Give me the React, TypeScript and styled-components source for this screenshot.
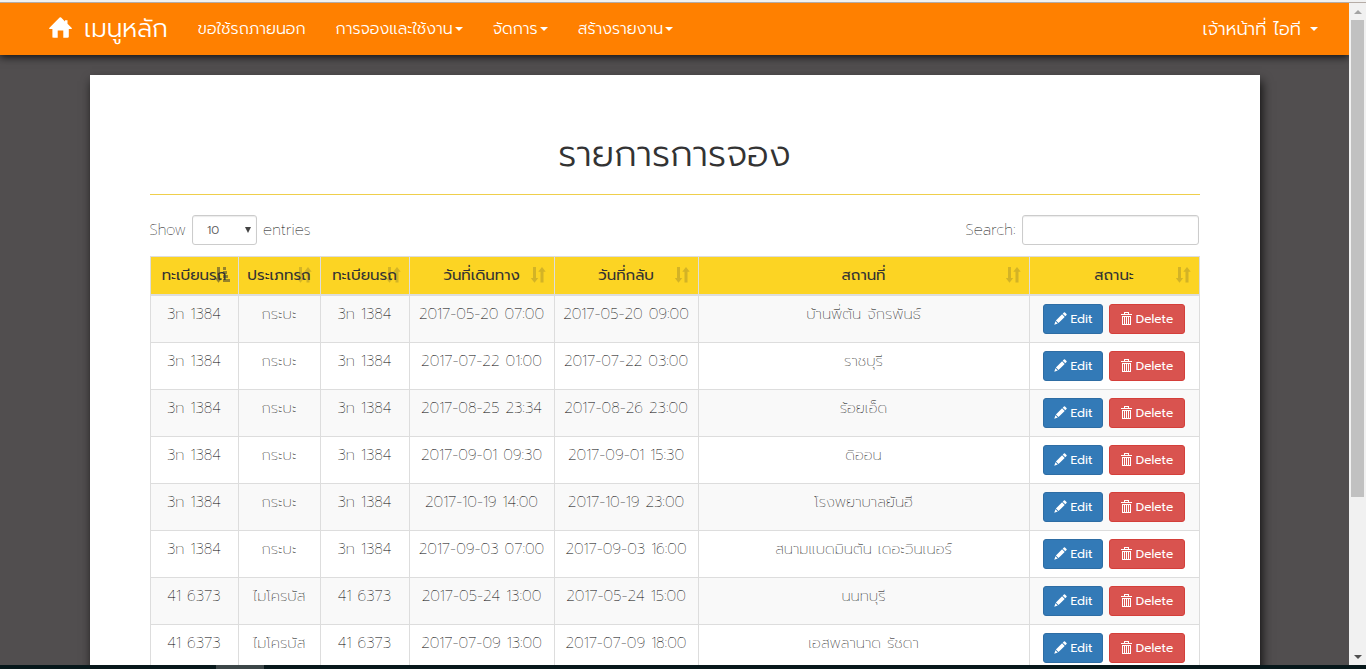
import React from "react";
import styled, { createGlobalStyle, css } from "styled-components";

const GlobalStyle = createGlobalStyle`
  *, *::before, *::after { box-sizing: border-box; }
  body {
    margin: 0;
    background: #514e4f;
    color: #000;
    font-family: Prompt, Inter, "Noto Sans Thai", "Open Sans", sans-serif;
    font-size: 15px;
    font-weight: 200;
    line-height: 20px;
  }
`;

const Window = styled.div`
  display: flex;
  flex-direction: column;
  height: 100vh;
  overflow: hidden;
`;

const TopEdge = styled.div`
  flex: none;
  height: 3px;
  background: #f1f1f1;
  border-bottom: 1px solid #b5aca6;
`;

const BottomEdge = styled.div`
  flex: none;
  height: 4px;
  padding-left: 216px;
  background: #07181b;
`;

const ActiveTask = styled.div`
  width: 48px;
  height: 100%;
  background: #3c4648;
`;

const Viewport = styled.div`
  display: flex;
  flex: 1;
  min-height: 0;
`;

const Page = styled.div`
  flex: 1;
  min-width: 0;
  overflow: hidden;
`;

const ScrollTrack = styled.div`
  display: flex;
  flex-direction: column;
  align-items: center;
  flex: none;
  width: 17px;
  background: #f1f1f1;
`;

const ScrollButton = styled.button`
  display: flex;
  align-items: center;
  justify-content: center;
  flex: none;
  width: 17px;
  height: 17px;
  padding: 0;
  border: 0;
  background: none;
`;

const ScrollThumb = styled.div`
  width: 13px;
  height: 72%;
  background: #c1c1c1;
`;

const ScrollSpace = styled.div`
  flex: 1;
`;

const Navbar = styled.nav`
  position: relative;
  display: flex;
  align-items: center;
  height: 52px;
  padding: 0 31px 0 49px;
  background: #ff8000;
  font-weight: 300;
  box-shadow: 0 2px 8px rgba(0, 0, 0, 0.8);
`;

const Brand = styled.a`
  display: flex;
  align-items: center;
  gap: 12px;
  margin-right: 30px;
  color: #fff;
  font-size: 25px;
  line-height: 32px;
  text-decoration: none;

  svg { margin-bottom: 4px; }
`;

const NavLinks = styled.div`
  display: flex;
  flex: 1;
  gap: 30px;
`;

const NavLink = styled.a<{ $large?: boolean }>`
  display: flex;
  align-items: center;
  gap: ${(p) => (p.$large ? 9 : 2)}px;
  color: #fff;
  font-size: ${(p) => (p.$large ? 18 : 16)}px;
  line-height: 24px;
  text-decoration: none;
  white-space: nowrap;
`;

const Caret = styled.span`
  border-top: 4px solid #fff;
  border-left: 4px solid transparent;
  border-right: 4px solid transparent;
`;

const Card = styled.main`
  max-width: 1170px;
  margin: 20px auto 0;
  padding: 60px;
  background: #fff;
  box-shadow: 2px 6px 10px rgba(0, 0, 0, 0.8);
`;

const Title = styled.h1`
  margin: 0 0 20px;
  padding-bottom: 21px;
  border-bottom: 1px solid #efcf4c;
  color: #333;
  font-size: 36px;
  font-weight: 300;
  line-height: 38px;
  text-align: center;
`;

const Controls = styled.div`
  display: flex;
  justify-content: space-between;
  margin-bottom: 11px;
  padding-right: 1px;
`;

const ControlLabel = styled.label`
  display: flex;
  align-items: center;
  gap: 6px;
`;

const fieldStyle = css`
  height: 30px;
  border: 1px solid #ccc;
  border-radius: 3px;
  background: #fff;
  color: #555;
  font: inherit;
  font-size: 12px;
  font-weight: 300;
  box-shadow: inset 0 1px 1px rgba(0, 0, 0, 0.08);
`;

const SelectWrap = styled.span`
  position: relative;
  display: flex;
`;

const SelectArrow = styled.span`
  position: absolute;
  top: 12px;
  right: 6px;
  border-top: 6px solid #444;
  border-left: 3px solid transparent;
  border-right: 3px solid transparent;
  pointer-events: none;
`;

const LengthSelect = styled.select`
  ${fieldStyle}
  width: 65px;
  padding: 0 14px;
  appearance: none;
`;

const SearchInput = styled.input`
  ${fieldStyle}
  width: 177px;
  padding: 5px 10px;
`;

const Table = styled.table`
  width: 100%;
  border-collapse: collapse;
  table-layout: fixed;
  text-align: center;
`;

const HeadCell = styled.th`
  position: relative;
  padding: 8px 0 9px;
  border: 1px solid #ddd;
  border-bottom-width: 2px;
  background: #fcd423;
  color: #333;
  font-weight: 400;
  white-space: nowrap;
`;

const SortMark = styled.span<{ $active?: boolean }>`
  position: absolute;
  right: 8px;
  bottom: 11px;
  display: flex;
  opacity: ${(p) => (p.$active ? 0.5 : 0.2)};
`;

const Row = styled.tr`
  &:nth-child(odd) { background: #f9f9f9; }
`;

const Cell = styled.td`
  padding: 8px 0;
  border: 1px solid #ddd;
  vertical-align: top;
  white-space: nowrap;
`;

const Actions = styled.div`
  display: flex;
  justify-content: center;
  gap: 6px;
`;

const ActionButton = styled.button<{ $danger?: boolean }>`
  display: flex;
  align-items: center;
  justify-content: center;
  gap: 4px;
  width: ${(p) => (p.$danger ? 76 : 60)}px;
  height: 30px;
  padding: 0;
  border: 1px solid ${(p) => (p.$danger ? "#d43f3a" : "#2e6da4")};
  border-radius: 3px;
  background: ${(p) => (p.$danger ? "#d9534f" : "#337ab7")};
  color: #fff;
  font: inherit;
  font-size: 12px;
  font-weight: 400;

  svg { margin-bottom: 2px; }
`;

const HomeIcon = () => (
  <svg width="23" height="21" viewBox="0 0 23 21" fill="#fff" aria-hidden="true">
    <path d="M10.600.6a1.100 1.100 0 0 1 1.500 0L16 4.400V3.300h2.500v3.500l4 3.900c.6.6.4 1.300-.4 1.300h-2.300v7.500c0 .8-.4 1.200-1.200 1.200h-4.300v-7.200H8.700v7.200H4.600c-.8 0-1.200-.4-1.200-1.200V12H.9c-.8 0-1-.7-.4-1.300z" />
  </svg>
);

const PencilIcon = () => (
  <svg width="13" height="13" viewBox="0 0 13 13" fill="#fff" aria-hidden="true">
    <path d="M9.900.5a.8.8 0 0 1 1.100 0l1.500 1.500a.8.8 0 0 1 0 1.100l-1.200 1.200-2.600-2.600zM8.100 2.300l2.600 2.600-6.200 6.200-2.600-2.600zM1.400 9.200l2.400 2.400-3.500 1.100z" />
  </svg>
);

const TrashIcon = () => (
  <svg width="11" height="13" viewBox="0 0 11 13" fill="none" stroke="#fff" shapeRendering="crispEdges" aria-hidden="true">
    <path d="M3.500 2V.5h4V2M0 2.500h11M1 4.500h9M1.500 4v8.500h8V4M3.500 4.500v8M5.500 4.500v8M7.500 4.500v8" />
  </svg>
);

const SortIcon = () => (
  <svg width="15" height="16" viewBox="0 0 15 16" fill="#333" aria-hidden="true">
    <path d="M2 0h3v11h2.200L3.500 15.800-.2 11H2zM9.500 15.500h3V4.800h2.200L11 0 7.300 4.800h2.200z" />
  </svg>
);

const SortActiveIcon = () => (
  <svg width="15" height="16" viewBox="0 0 15 16" fill="#333" aria-hidden="true">
    <path d="M2 0h3v11h2.200L3.500 15.800-.2 11H2zM8 0h3v3H8zM8 4h4v3H8zM8 8h5v3H8zM8 12h7v3H8z" />
  </svg>
);

const columns = [
  { title: "ทะเบียนรถ", width: 88 },
  { title: "ประเภทรถ", width: 82 },
  { title: "ทะเบียนรถ", width: 89 },
  { title: "วันที่เดินทาง", width: 145 },
  { title: "วันที่กลับ", width: 144 },
  { title: "สถานที่", width: undefined },
  { title: "สถานะ", width: 170 },
];

const bookings = [
  ["3ท 1384", "กระบะ", "2017-05-20 07:00", "2017-05-20 09:00", "บ้านพี่ต้น จักรพันธ์"],
  ["3ท 1384", "กระบะ", "2017-07-22 01:00", "2017-07-22 03:00", "ราชบุรี"],
  ["3ท 1384", "กระบะ", "2017-08-25 23:34", "2017-08-26 23:00", "ร้อยเอ็ด"],
  ["3ท 1384", "กระบะ", "2017-09-01 09:30", "2017-09-01 15:30", "ดิออน"],
  ["3ท 1384", "กระบะ", "2017-10-19 14:00", "2017-10-19 23:00", "โรงพยาบาลยันฮี"],
  ["3ท 1384", "กระบะ", "2017-09-03 07:00", "2017-09-03 16:00", "สนามแบดมินตัน เดอะวินเนอร์"],
  ["41 6373", "ไมโครบัส", "2017-05-24 13:00", "2017-05-24 15:00", "นนทบุรี"],
  ["41 6373", "ไมโครบัส", "2017-07-09 13:00", "2017-07-09 18:00", "เอสพลานาด รัชดา"],
];

export default function App() {
  return (
    <Window>
      <GlobalStyle />
      <TopEdge />
      <Viewport>
        <Page>
          <Navbar>
            <Brand href="#"><HomeIcon />เมนูหลัก</Brand>
            <NavLinks>
              <NavLink href="#">ขอใช้รถภายนอก</NavLink>
              <NavLink href="#">การจองและใช้งาน<Caret /></NavLink>
              <NavLink href="#">จัดการ<Caret /></NavLink>
              <NavLink href="#">สร้างรายงาน<Caret /></NavLink>
            </NavLinks>
            <NavLink href="#" $large>เจ้าหน้าที่ ไอที<Caret /></NavLink>
          </Navbar>
          <Card>
            <Title>รายการการจอง</Title>
            <Controls>
              <ControlLabel>
                Show
                <SelectWrap>
                  <LengthSelect defaultValue="10">
                    <option>10</option>
                    <option>25</option>
                    <option>50</option>
                  </LengthSelect>
                  <SelectArrow />
                </SelectWrap>
                entries
              </ControlLabel>
              <ControlLabel>
                Search:
                <SearchInput type="search" />
              </ControlLabel>
            </Controls>
            <Table>
              <colgroup>
                {columns.map((c, i) => <col key={i} width={c.width} />)}
              </colgroup>
              <thead>
                <tr>
                  {columns.map((c, i) => (
                    <HeadCell key={i} scope="col">
                      {c.title}
                      <SortMark $active={i === 0}>
                        {i === 0 ? <SortActiveIcon /> : <SortIcon />}
                      </SortMark>
                    </HeadCell>
                  ))}
                </tr>
              </thead>
              <tbody>
                {bookings.map(([plate, kind, start, end, place], i) => (
                  <Row key={i}>
                    <Cell>{plate}</Cell>
                    <Cell>{kind}</Cell>
                    <Cell>{plate}</Cell>
                    <Cell>{start}</Cell>
                    <Cell>{end}</Cell>
                    <Cell>{place}</Cell>
                    <Cell>
                      <Actions>
                        <ActionButton type="button"><PencilIcon />Edit</ActionButton>
                        <ActionButton type="button" $danger><TrashIcon />Delete</ActionButton>
                      </Actions>
                    </Cell>
                  </Row>
                ))}
              </tbody>
            </Table>
          </Card>
        </Page>
        <ScrollTrack>
          <ScrollButton type="button" aria-label="Scroll up">
            <svg width="8" height="4" viewBox="0 0 8 4" fill="#a3a3a3"><path d="M0 4 4 0l4 4z" /></svg>
          </ScrollButton>
          <ScrollThumb />
          <ScrollSpace />
          <ScrollButton type="button" aria-label="Scroll down">
            <svg width="8" height="4" viewBox="0 0 8 4" fill="#505050"><path d="M0 0h8L4 4z" /></svg>
          </ScrollButton>
        </ScrollTrack>
      </Viewport>
      <BottomEdge><ActiveTask /></BottomEdge>
    </Window>
  );
}
